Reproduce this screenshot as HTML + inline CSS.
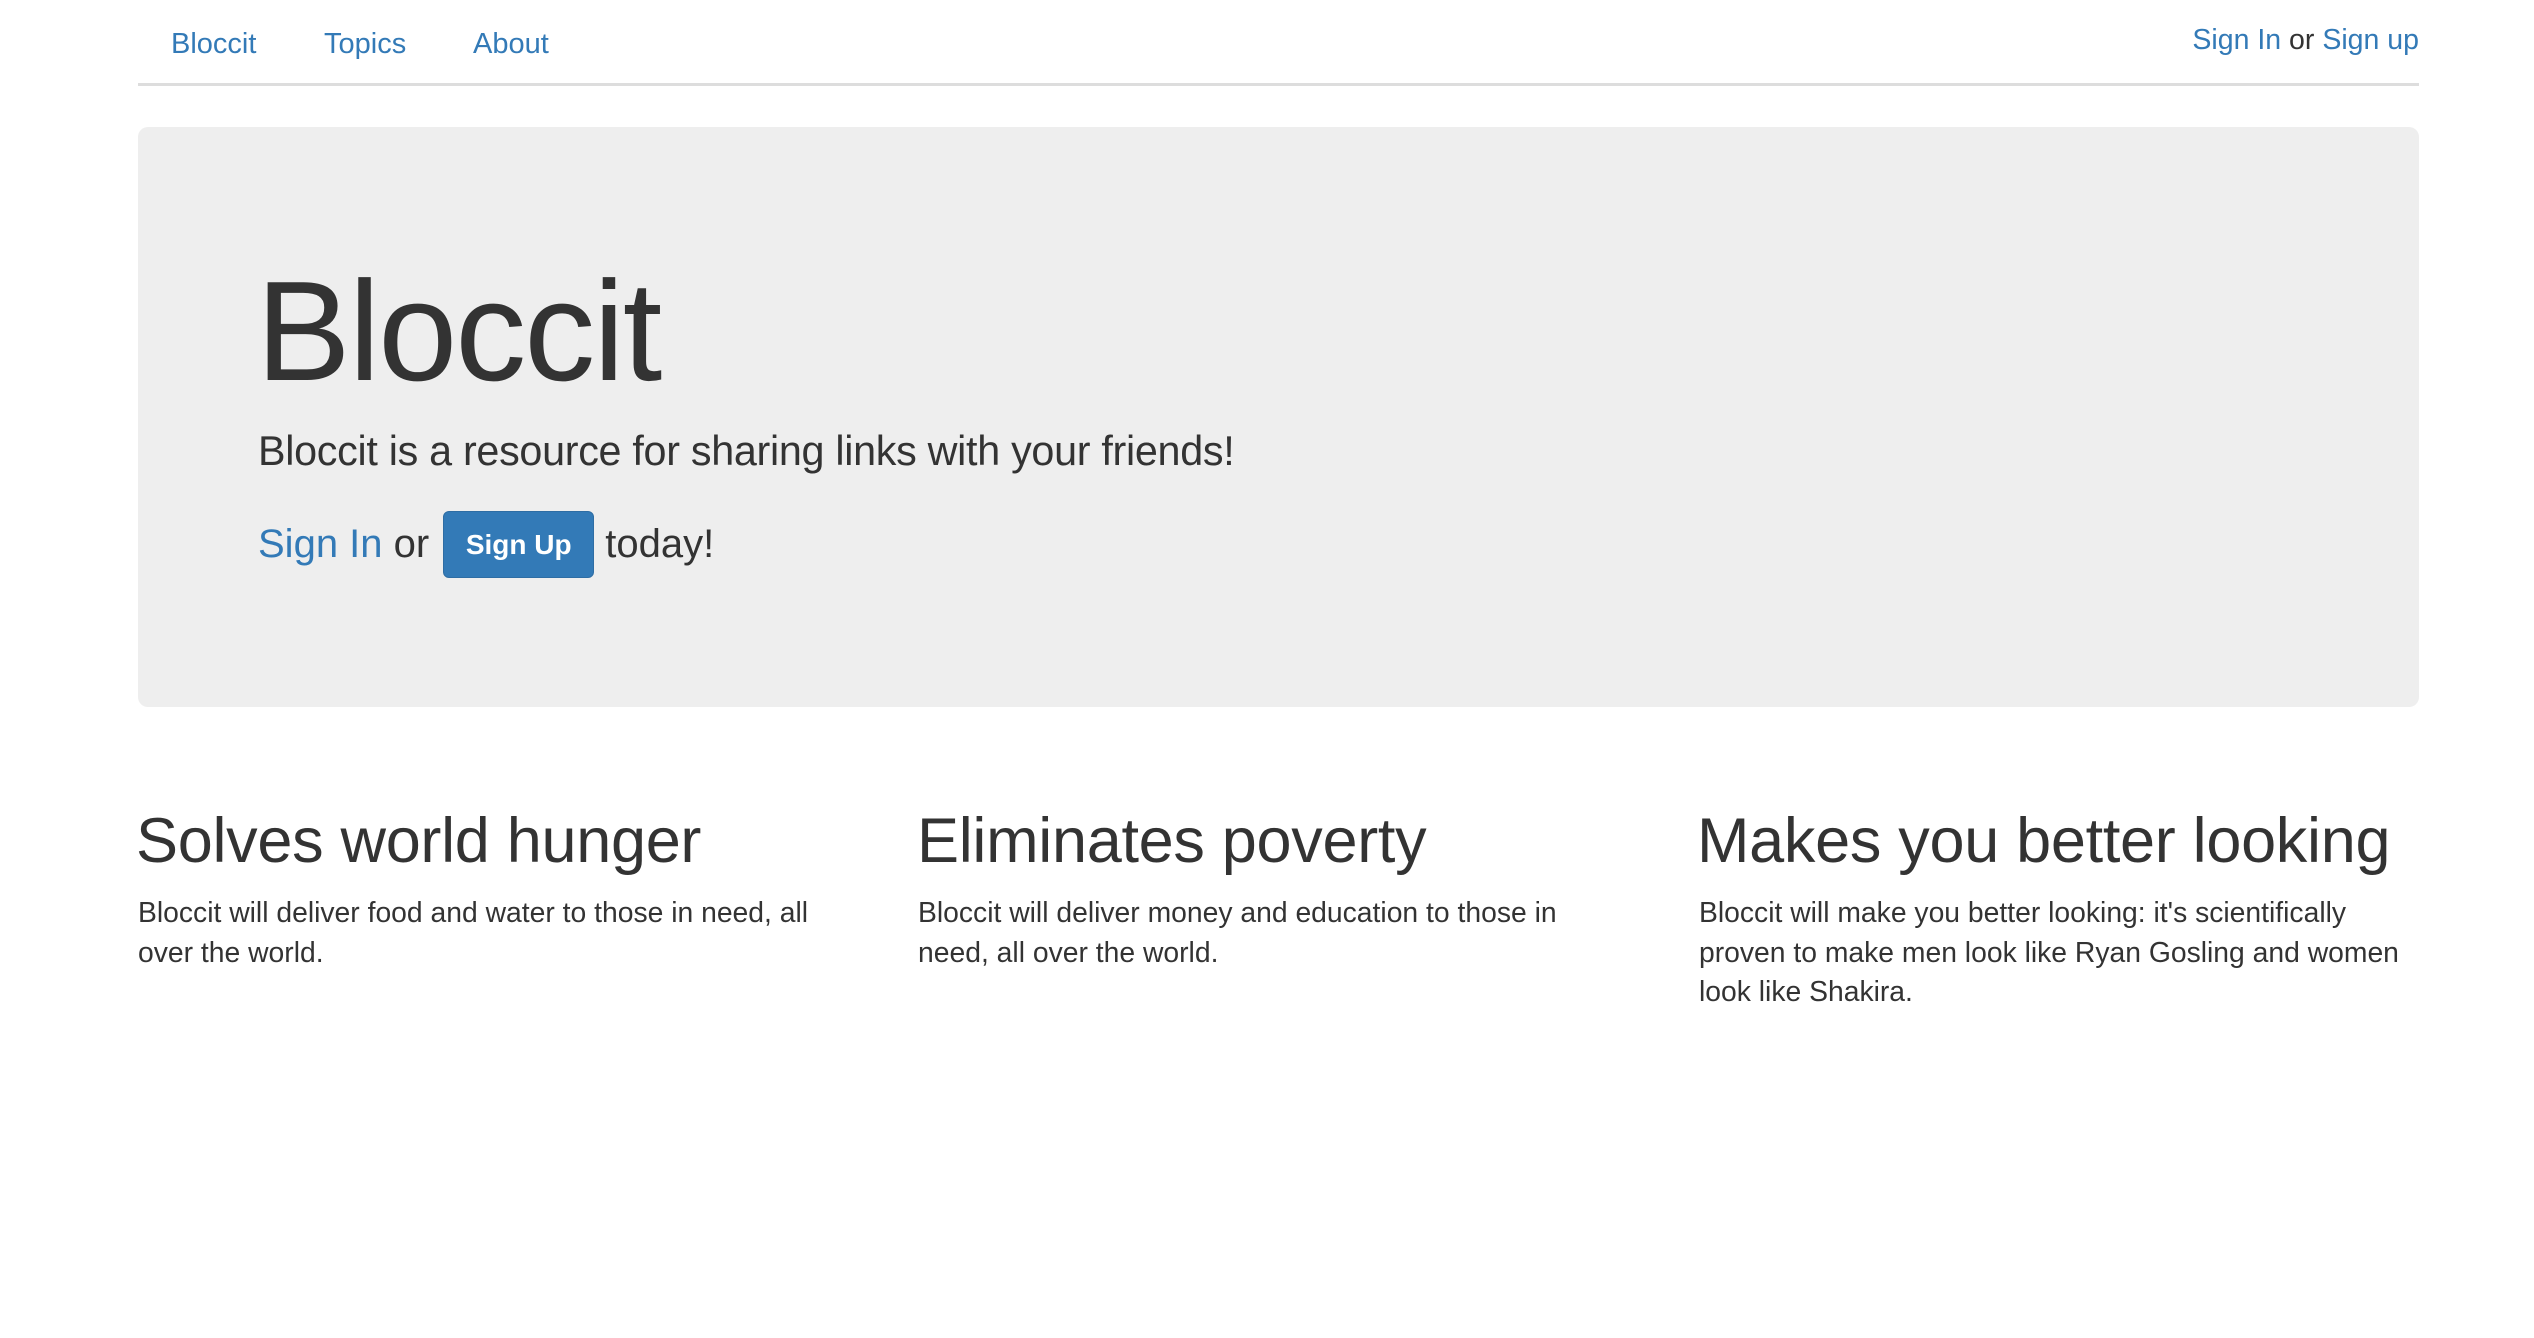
<!DOCTYPE html>
<html><head><meta charset="utf-8"><style>
html,body{margin:0;padding:0;background:#fff;width:2534px;height:1338px;overflow:hidden}
body{font-family:"Liberation Sans",Helvetica,Arial,sans-serif;color:#333;position:relative}
a{color:#337ab7;text-decoration:none}
.abs{position:absolute;white-space:nowrap}
.nav{font-size:29px;top:26px;line-height:36px}
.line{position:absolute;left:138px;width:2281px;top:83px;height:3px;background:#ddd}
.jumbo{position:absolute;left:138px;top:127px;width:2281px;height:580px;background:#eee;border-radius:10px}
h1{position:absolute;margin:0;left:256px;top:252px;font-size:142px;font-weight:normal;line-height:160px;letter-spacing:-2px}
.sub{left:258px;top:426px;font-size:41.3px;line-height:50px;letter-spacing:-0.3px}
.cta{left:258px;top:513px;font-size:40px;line-height:56px}
.btn{display:inline-block;vertical-align:middle;width:149px;height:65px;background:#337ab7;border:1px solid #2e6da4;border-radius:6px;color:#fff;font-size:28px;font-weight:bold;line-height:65px;text-align:center;margin:0 11px 0 14px;position:relative;top:-2px}
h2{position:absolute;margin:0;font-size:63px;font-weight:normal;line-height:70px;top:806px;letter-spacing:-0.3px}
.p{top:893px;font-size:28.3px;line-height:39.6px}
</style></head><body>
<a class="abs nav" style="left:171px">Bloccit</a>
<a class="abs nav" style="left:324px">Topics</a>
<a class="abs nav" style="left:473px">About</a>
<div class="abs nav" style="right:115px;top:22px;font-size:28.5px"><a>Sign In</a> or <a>Sign up</a></div>
<div class="line"></div>
<div class="jumbo"></div>
<h1>Bloccit</h1>
<div class="abs sub">Bloccit is a resource for sharing links with your friends!</div>
<div class="abs cta"><a>Sign In</a> or<span class="btn">Sign Up</span>today!</div>
<h2 style="left:136px">Solves world hunger</h2>
<h2 style="left:917px">Eliminates poverty</h2>
<h2 style="left:1697px">Makes you better looking</h2>
<div class="abs p" style="left:138px">Bloccit will deliver food and water to those in need, all<br>over the world.</div>
<div class="abs p" style="left:918px">Bloccit will deliver money and education to those in<br>need, all over the world.</div>
<div class="abs p" style="left:1699px">Bloccit will make you better looking: it's scientifically<br>proven to make men look like Ryan Gosling and women<br>look like Shakira.</div>
</body></html>
